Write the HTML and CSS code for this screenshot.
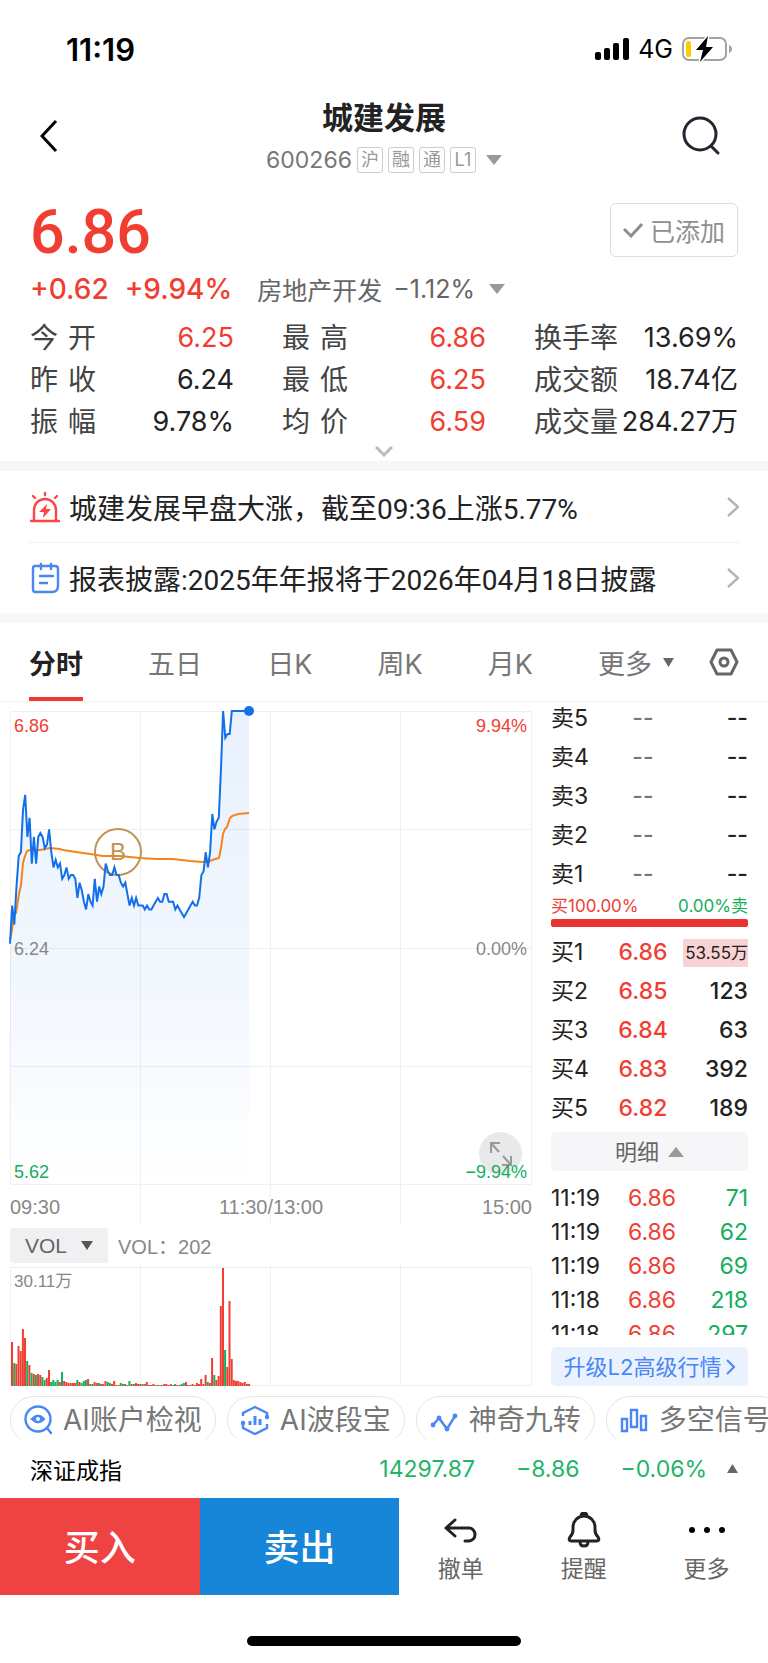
FILE: index.html
```html
<!DOCTYPE html>
<html lang="zh-CN">
<head>
  <meta charset="UTF-8" />
  <meta name="viewport" content="width=device-width, initial-scale=1" />
  <title>城建发展 600266</title>
  <link rel="stylesheet" href="styles.css">
</head>
<body>

<div class="status-bar">
  <span class="status-time">11:19</span>
  <div class="status-right">
    <svg width="34" height="22" viewBox="0 0 34 22">
      <rect x="0" y="14" width="6" height="8" rx="2"/>
      <rect x="9" y="10" width="6" height="12" rx="2"/>
      <rect x="18" y="5" width="6" height="17" rx="2"/>
      <rect x="28" y="0" width="6" height="22" rx="2"/>
    </svg>
    <span class="status-net">4G</span>
    <svg width="50" height="26" viewBox="0 0 50 26">
      <rect x="1" y="2" width="43" height="22" rx="6" fill="none" stroke="#a3a3a3" stroke-width="2"/>
      <path d="M47 9c2 1 3 2 3 4s-1 3-3 4z" fill="#a3a3a3"/>
      <rect x="4" y="5" width="5" height="16" rx="2" fill="#fc0"/>
      <path d="M26 0 14 14h7l-3 12L31 11h-7z" stroke="#fff" stroke-width="3" paint-order="stroke"/>
    </svg>
  </div>
</div>

<header class="header">
  <button class="icon-btn" aria-label="返回">
    <svg width="18" height="34" viewBox="0 0 18 34" fill="none" stroke="#000" stroke-width="3"><path d="M16 2 2 17l14 15"/></svg>
  </button>
  <div class="header-center">
    <h1 class="stock-name">城建发展</h1>
    <div class="stock-code">
      <span class="code">600266</span>
      <span class="tag">沪</span><span class="tag">融</span><span class="tag">通</span><span class="tag">L1</span>
      <svg class="code-arrow" width="16" height="10" viewBox="0 0 16 10" fill="#999"><path d="M0 0h16L8 10z"/></svg>
    </div>
  </div>
  <button class="icon-btn" aria-label="搜索">
    <svg width="40" height="40" viewBox="0 0 40 40" fill="none" stroke="#23252f" stroke-width="3" stroke-linecap="round"><circle cx="18" cy="18" r="16"/><path d="m29 30 7 7"/></svg>
  </button>
</header>

<section class="quote">
  <div class="price-row">
    <strong class="price">6.86</strong>
    <button class="added-btn">
      <svg width="20" height="16" viewBox="0 0 20 16" fill="none" stroke="#8f8f8f" stroke-width="3"><path d="m1 7 7 7L19 2"/></svg>
      已添加
    </button>
  </div>
  <div class="change-row">
    <span class="change">+0.62</span>
    <span class="change">+9.94%</span>
    <span class="sector">房地产开发</span>
    <span class="sector-num">−1.12%</span>
    <svg width="16" height="10" viewBox="0 0 16 10" fill="#999"><path d="M0 0h16L8 10z"/></svg>
  </div>
  <dl class="stats">
    <div class="stat"><dt class="two"><span>今</span><span>开</span></dt><dd class="up">6.25</dd></div>
    <div class="stat"><dt class="two"><span>最</span><span>高</span></dt><dd class="up">6.86</dd></div>
    <div class="stat"><dt>换手率</dt><dd>13.69%</dd></div>
    <div class="stat"><dt class="two"><span>昨</span><span>收</span></dt><dd>6.24</dd></div>
    <div class="stat"><dt class="two"><span>最</span><span>低</span></dt><dd class="up">6.25</dd></div>
    <div class="stat"><dt>成交额</dt><dd>18.74亿</dd></div>
    <div class="stat"><dt class="two"><span>振</span><span>幅</span></dt><dd>9.78%</dd></div>
    <div class="stat"><dt class="two"><span>均</span><span>价</span></dt><dd class="up">6.59</dd></div>
    <div class="stat"><dt>成交量</dt><dd>284.27万</dd></div>
  </dl>
  <button class="expand" aria-label="展开">
    <svg width="18" height="11" viewBox="0 0 18 11" fill="none" stroke="#bbb" stroke-width="3"><path d="m1 1 8 8 8-8"/></svg>
  </button>
</section>

<nav class="news">
  <a href="#" class="news-item">
    <svg width="32" height="32" viewBox="0 0 32 32" fill="none" stroke="#fa4646" stroke-width="2.4" stroke-linecap="round">
      <path d="M2 30h28M5 29V19a11 11 0 0 1 22 0v10M16 2v2M4 5l2 2M28 5l-2 2"/>
      <path d="m18 13-8 8h5l-1 6 8-9h-5z" fill="#fa4646" stroke="none"/>
    </svg>
    <span class="news-text">城建发展早盘大涨，截至09:36上涨5.77%</span>
    <svg width="12" height="20" viewBox="0 0 12 20" fill="none" stroke="#b5b5b5" stroke-width="2.4"><path d="m1 1 10 9-10 9"/></svg>
  </a>
  <a href="#" class="news-item">
    <svg width="32" height="32" viewBox="0 0 32 32" fill="none" stroke="#4a86f7" stroke-width="2.4" stroke-linecap="round">
      <path d="M6 4h20q3 0 3 3v17q0 6-6 6H6q-2 0-2-3V7q0-3 2-3zM12 2v5M22 2v5M11 14h13M11 21h7"/>
    </svg>
    <span class="news-text">报表披露:2025年年报将于2026年04月18日披露</span>
    <svg width="12" height="20" viewBox="0 0 12 20" fill="none" stroke="#b5b5b5" stroke-width="2.4"><path d="m1 1 10 9-10 9"/></svg>
  </a>
</nav>

<nav class="tabs">
  <div class="tab-list">
    <button class="tab active">分时</button>
    <button class="tab">五日</button>
    <button class="tab">日K</button>
    <button class="tab">周K</button>
    <button class="tab">月K</button>
    <button class="tab">更多 <svg width="11" height="9" viewBox="0 0 11 9" fill="#666"><path d="M0 0h11L5.500 9z"/></svg></button>
  </div>
  <button class="tab" aria-label="设置">
    <svg width="30" height="28" viewBox="0 0 30 28" fill="none" stroke="#666" stroke-width="3"><path d="M8 2h14l6 12-6 12H8L2 14z" stroke-linejoin="round"/><circle cx="15" cy="14" r="4"/></svg>
  </button>
</nav>

<main class="market">
  <div class="charts">
    <div class="price-chart">
      <svg class="plot" viewBox="0 0 522 513" preserveAspectRatio="none">
        <defs>
          <linearGradient id="fade" x1="0" y1="0" x2="0" y2="474" gradientUnits="userSpaceOnUse">
            <stop offset="0" stop-color="#1370e8" stop-opacity=".1"/>
            <stop offset=".6" stop-color="#1370e8" stop-opacity=".05"/>
            <stop offset="1" stop-color="#1370e8" stop-opacity="0"/>
          </linearGradient>
        </defs>
        <path class="grid" d="M0 .5h522M0 118.500h522M0 237.500h522M0 355.500h522M0 473.500h522M.5 0v474M130.500 0v513M260.500 0v513M390.500 0v513M521.500 0v474"/>
        <path id="area" fill="url(#fade)"/>
        <polyline class="avg" points="0,229 2,219 4,202 6,202 9,183 11,174 13,152 15,145 17,140 20,139 30,139 40,137 50,138 53,139 66,141 80,143 93,145 110,145 130,147 146,148 163,148 180,150 193,151 198,151 202,149 209,147 211,137 213,123 215,118 217,116 220,107 222,105 228,103 239,102"/>
        <g class="buy-mark"><circle cx="108" cy="141" r="23"/></g>
        <polyline id="line" class="line"/>
        <circle cx="239" cy="0" r="5" fill="#1370e8"/>
      </svg>
      <span class="label top-left up">6.86</span>
      <span class="label top-right up">9.94%</span>
      <span class="label mid-left">6.24</span>
      <span class="label mid-right">0.00%</span>
      <span class="label low-left down">5.62</span>
      <button class="full-btn" aria-label="全屏">
        <svg width="26" height="26" viewBox="0 0 26 26" fill="none" stroke="#999" stroke-width="2"><path d="M3 12V2h9M3 2l8 9M23 15v9h-9M23 24l-8-9"/></svg>
      </button>
      <span class="label low-right down">−9.94%</span>
      <span class="mark-text">B</span>
      <div class="times"><span>09:30</span><span>11:30/13:00</span><span>15:00</span></div>
    </div>
    <div class="vol-head">
      <button class="vol-btn">VOL <svg width="12" height="9" viewBox="0 0 12 9" fill="#555"><path d="M0 0h12L6 9z"/></svg></button>
      <span>VOL：202</span>
    </div>
    <div class="vol-chart">
      <svg class="plot" viewBox="0 0 522 121" preserveAspectRatio="none">
        <path class="grid" d="M0 2.500h522M0 120.500h522M.5 2v119M130.500 0v121M260.500 0v121M390.500 0v121M521.500 2v119"/>
        <g id="bars"></g>
      </svg>
      <span class="label vol-max">30.11万</span>
    </div>
  </div>

  <aside class="book">
    <table class="depth sell">
      <tr><th>卖5</th><td>--</td><td>--</td></tr>
      <tr><th>卖4</th><td>--</td><td>--</td></tr>
      <tr><th>卖3</th><td>--</td><td>--</td></tr>
      <tr><th>卖2</th><td>--</td><td>--</td></tr>
      <tr><th>卖1</th><td>--</td><td>--</td></tr>
    </table>
    <div class="ratio"><span class="up">买100.00%</span><span class="down">0.00%卖</span></div>
    <div class="ratio-bar"></div>
    <table class="depth buy">
      <tr><th>买1</th><td>6.86</td><td><span class="flash">53.55万</span></td></tr>
      <tr><th>买2</th><td>6.85</td><td>123</td></tr>
      <tr><th>买3</th><td>6.84</td><td>63</td></tr>
      <tr><th>买4</th><td>6.83</td><td>392</td></tr>
      <tr><th>买5</th><td>6.82</td><td>189</td></tr>
    </table>
    <button class="detail-btn">明细 <svg width="16" height="10" viewBox="0 0 16 10" fill="#999"><path d="M0 10h16L8 0z"/></svg></button>
    <div class="trades-wrap">
      <table class="trades">
        <tr><th>11:19</th><td>6.86</td><td>71</td></tr>
        <tr><th>11:19</th><td>6.86</td><td>62</td></tr>
        <tr><th>11:19</th><td>6.86</td><td>69</td></tr>
        <tr><th>11:18</th><td>6.86</td><td>218</td></tr>
        <tr><th>11:18</th><td>6.86</td><td>297</td></tr>
      </table>
    </div>
    <a href="#" class="upgrade">升级L2高级行情 <svg width="9" height="16" viewBox="0 0 9 16" fill="none" stroke="#4a86f7" stroke-width="2"><path d="m1 1 7 7-7 7"/></svg></a>
  </aside>
</main>

<div class="chips">
  <button class="chip">
    <svg width="28" height="30" viewBox="0 0 28 30" fill="none" stroke="#4a86f7" stroke-width="2.400" stroke-linecap="round"><circle cx="14" cy="14" r="12.500"/><path d="m23 23 4 5"/><path d="M7 14q7-8 14 0-7 8-14 0z" fill="#4a86f7" stroke-width="1"/><circle cx="14" cy="14" r="2" fill="#fff" stroke="none"/></svg>
    AI账户检视
  </button>
  <button class="chip">
    <svg width="28" height="30" viewBox="0 0 28 30" fill="none" stroke="#4a86f7" stroke-width="2.400"><path d="M2 11V8l12-6 12 6v5M2 18v5l12 6 12-6v-4"/><path d="M9 16v4M14 11v9M19 14v6" stroke-width="3"/><circle cx="2" cy="18" r="1"/><circle cx="26" cy="12" r="1"/></svg>
    AI波段宝
  </button>
  <button class="chip">
    <svg width="28" height="30" viewBox="0 0 28 30" fill="#4a86f7" stroke="#4a86f7" stroke-width="2.400" stroke-linejoin="round"><path d="m3 20 6-7 8 11 8-13" fill="none"/><circle cx="3" cy="20" r="1.200"/><circle cx="9" cy="13" r="1.200"/><circle cx="17" cy="24" r="1.200"/><circle cx="25" cy="11" r="1.200"/></svg>
    神奇九转
  </button>
  <button class="chip">
    <svg width="28" height="30" viewBox="0 0 28 30" fill="none" stroke="#4a86f7" stroke-width="2.400"><path d="M2 14h5v12H2zM11 5h6v17h-6zM21 11h5v14h-5z"/></svg>
    多空信号
  </button>
</div>

<div class="index-row">
  <span class="index-name">深证成指</span>
  <span>14297.87</span>
  <span>−8.86</span>
  <span>−0.06%</span>
  <svg width="11" height="9" viewBox="0 0 11 9" fill="#666"><path d="M0 9h11L5.500 0z"/></svg>
</div>

<footer class="actions">
  <button class="trade-btn buy-btn">买入</button>
  <button class="trade-btn sell-btn">卖出</button>
  <button class="tool">
    <svg width="36" height="36" viewBox="0 0 36 36" fill="none" stroke="#222" stroke-width="3" stroke-linecap="round" stroke-linejoin="round"><path d="M12 8 3 16l9 8M3 16h23a6 6.500 0 0 1 0 13h-4"/></svg>
    撤单
  </button>
  <button class="tool">
    <svg width="36" height="36" viewBox="0 0 36 36" fill="none" stroke="#222" stroke-width="3" stroke-linejoin="round"><path d="M5 29q-3 0-1-4 3-3 3-7v-3a11 11 0 0 1 22 0v3q0 4 3 7 2 4-1 4zM15 4q0-3 3-3t3 3M14 30q0 4 4 4t4-4"/></svg>
    提醒
  </button>
  <button class="tool">
    <svg width="36" height="36" viewBox="0 0 36 36"><circle cx="3" cy="18" r="3"/><circle cx="18" cy="18" r="3"/><circle cx="33" cy="18" r="3"/></svg>
    更多
  </button>
</footer>

<div class="home-area"><div class="home-bar"></div></div>

<script src="chart.js"></script>
</body>
</html>
```

FILE: styles.css
```css
* {
  box-sizing: border-box;
}

body {
  margin: 0;
  background: #fff;
  color: #222;
  font-family: Inter, "Noto Sans CJK SC", sans-serif;
}

button {
  margin: 0;
  padding: 0;
  border: 0;
  background: none;
  color: inherit;
  font: inherit;
  cursor: pointer;
}

a {
  color: inherit;
  text-decoration: none;
}

svg {
  flex: none;
}

.up {
  color: #f03e33;
}

.down {
  color: #14ae5c;
}

/* status bar */
.status-bar {
  display: flex;
  justify-content: space-between;
  align-items: center;
  height: 98px;
  padding: 0 36px 0 66px;
  color: #000;
}

.status-time {
  font-size: 31px;
  font-weight: 600;
}

.status-right {
  display: flex;
  align-items: center;
  gap: 9px;
}

.status-net {
  font-size: 25px;
}

/* header */
.header {
  display: flex;
  justify-content: space-between;
  height: 92px;
  padding: 0 40px;
}

.icon-btn {
  display: flex;
  align-items: center;
  width: 46px;
  height: 76px;
}

.stock-name {
  margin: 0;
  font-size: 31px;
  line-height: 40px;
  font-weight: 700;
  text-align: center;
}

.stock-code {
  display: flex;
  align-items: center;
  gap: 5px;
  margin-top: 9px;
}

.code {
  font-size: 23px;
  line-height: 26px;
  color: #777;
}

.tag {
  width: 26px;
  height: 26px;
  border: 1px solid #ccc;
  border-radius: 3px;
  font-size: 18px;
  line-height: 24px;
  text-align: center;
  color: #999;
}

.code-arrow {
  margin-left: 5px;
}

/* quote */
.quote {
  padding: 13px 30px 0;
}

.price-row {
  display: flex;
  justify-content: space-between;
  align-items: center;
  height: 54px;
}

.price {
  padding-top: 3px;
  font-family: Roboto, sans-serif;
  font-size: 61px;
  line-height: 54px;
  font-weight: 500;
  color: #f03e33;
}

.added-btn {
  display: flex;
  align-items: center;
  justify-content: center;
  gap: 7px;
  width: 128px;
  height: 54px;
  border: 1px solid #ddd;
  border-radius: 6px;
  font-size: 25px;
  color: #8f8f8f;
}

.change-row {
  display: flex;
  align-items: center;
  height: 32px;
  margin-top: 16px;
  white-space: nowrap;
}

.change {
  margin-right: 16px;
  font-size: 28px;
  font-weight: 500;
  color: #f03e33;
}

.sector {
  margin: 0 11px 0 9px;
  font-size: 25px;
  color: #666;
}

.sector-num {
  margin-right: 14px;
  font-size: 25px;
  color: #666;
}

.stats {
  display: grid;
  grid-template-columns: repeat(3, 1fr);
  column-gap: 48px;
  margin: 12px 0 0;
}

.stat {
  display: flex;
  justify-content: space-between;
  height: 42px;
  font-size: 28px;
  line-height: 42px;
  white-space: nowrap;
}

.stat dt {
  color: #444;
}

.stat dd {
  margin: 0;
  font-size: 27px;
}

.two {
  display: flex;
  justify-content: space-between;
  width: 66px;
}

.expand {
  display: flex;
  justify-content: center;
  width: 100%;
  height: 18px;
  padding-top: 3px;
}

/* news */
.news {
  padding: 0 29px;
  border-top: 10px solid #f5f6f9;
  border-bottom: 10px solid #f8f8f9;
}

.news-item {
  display: flex;
  align-items: center;
  height: 71px;
}

.news-item + .news-item {
  border-top: 1px solid #f2f2f2;
}

.news-text {
  flex: 1;
  margin-left: 8px;
  font-family: Roboto, "Noto Sans CJK SC", sans-serif;
  font-size: 28px;
}

/* tabs */
.tabs {
  display: flex;
  gap: 35px;
  height: 79px;
  padding: 0 29px;
  border-bottom: 1px solid #f2f2f2;
}

.tab-list {
  display: flex;
  flex: 1;
  justify-content: space-between;
}

.tab {
  display: flex;
  align-items: center;
  gap: 11px;
  border-top: 4px solid transparent;
  border-bottom: 4px solid transparent;
  font-size: 27px;
  color: #777;
}

.tab.active {
  border-bottom-color: #ee3a33;
  font-weight: 700;
  color: #222;
}

/* charts and order book */
.market {
  display: grid;
  grid-template-columns: minmax(0, 1fr) 197px;
  column-gap: 19px;
  padding: 0 20px 10px 10px;
}

.charts {
  padding-top: 9px;
  font-family: "Liberation Sans", "Noto Sans CJK SC", sans-serif;
}

.price-chart {
  position: relative;
  display: flex;
  align-items: flex-end;
  height: 513px;
}

.plot {
  position: absolute;
  inset: 0;
  width: 100%;
  height: 100%;
  overflow: visible;
}

.grid {
  fill: none;
  stroke: #f0f0f0;
}

.line {
  fill: none;
  stroke: #1370e8;
  stroke-width: 2;
}

.avg {
  fill: none;
  stroke: #f58518;
  stroke-width: 2;
}

.buy-mark {
  fill: none;
  stroke: #c29350;
  stroke-width: 2;
}

.mark-text {
  position: absolute;
  left: 96px;
  top: 129px;
  width: 24px;
  font-size: 24px;
  line-height: 24px;
  text-align: center;
  color: #c29350;
}

.label {
  position: absolute;
  font-size: 18px;
  line-height: 20px;
}

.mid-left,
.mid-right,
.vol-max {
  color: #888;
}

.top-left,
.mid-left,
.low-left,
.vol-max {
  left: 4px;
}

.top-right,
.mid-right,
.low-right {
  right: 5px;
}

.top-left,
.top-right {
  top: 5px;
}

.mid-left,
.mid-right {
  top: 228px;
}

.low-left,
.low-right {
  bottom: 42px;
}

.vol-max {
  top: 7px;
  font-size: 17px;
}

.full-btn {
  position: absolute;
  right: 10px;
  bottom: 49px;
  width: 43px;
  height: 43px;
  border-radius: 50%;
  background: #e9e9e9;
  display: flex;
  align-items: center;
  justify-content: center;
}

.times {
  position: relative;
  display: flex;
  justify-content: space-between;
  width: 100%;
  font-size: 20px;
  line-height: 34px;
  color: #888;
}

.vol-head {
  display: flex;
  align-items: center;
  gap: 10px;
  margin: 4px 0 2px;
  font-size: 20px;
  color: #888;
}

.vol-btn {
  display: flex;
  align-items: center;
  justify-content: center;
  gap: 14px;
  width: 98px;
  height: 35px;
  border-radius: 3px;
  background: #f0f0f2;
  font-size: 21px;
  color: #666;
}

.vol-chart {
  position: relative;
  height: 121px;
}

.depth,
.trades {
  width: 100%;
  table-layout: fixed;
  border-collapse: collapse;
}

.depth {
  font-size: 23px;
}

.depth th,
.depth td,
.trades th,
.trades td {
  padding: 0 0 8px;
  line-height: 31px;
  font-weight: 400;
  text-align: center;
}

.depth tr:last-child > * {
  padding-bottom: 0;
}

.depth th {
  width: 60px;
  text-align: left;
  white-space: nowrap;
}

.depth td:nth-child(2) {
  width: 64px;
}

.depth td:last-child,
.trades td:last-child {
  text-align: right;
}

.sell {
  margin-top: 1px;
}

.sell td:nth-child(2) {
  color: #777;
}

.buy {
  margin-top: 10px;
}

.depth td {
  font-weight: 500;
}

.buy td:nth-child(2),
.trades td:nth-child(2) {
  color: #f03e33;
}

.flash {
  display: block;
  margin-left: 8px;
  background: #f9d3d3;
  font-size: 17px;
  line-height: 28px;
  font-weight: 400;
  white-space: nowrap;
}

.ratio {
  display: flex;
  justify-content: space-between;
  margin-top: 4px;
  font-size: 17px;
  line-height: 25px;
}

.ratio-bar {
  height: 8px;
  border-radius: 2px;
  background: #e93434;
}

.detail-btn,
.upgrade {
  display: flex;
  align-items: center;
  justify-content: center;
  gap: 9px;
  width: 100%;
  height: 39px;
  border-radius: 5px;
  font-size: 22px;
  line-height: 36px;
}

.detail-btn {
  margin-top: 8px;
  background: #f6f6f8;
  color: #666;
}

.trades-wrap {
  height: 154px;
  margin: 10px 0 12px;
  overflow: hidden;
}

.trades {
  font-size: 23px;
}

.trades th,
.trades td {
  padding: 0;
  line-height: 34px;
}

.trades th {
  width: 60px;
  text-align: left;
}

.trades td:nth-child(2) {
  width: 82px;
}

.trades td:last-child {
  color: #14ae5c;
}

.upgrade {
  gap: 5px;
  background: #eaf2fe;
  color: #4a86f7;
}

/* feature chips, cut off at the bottom of the scroll area */
.chips {
  display: flex;
  gap: 11px;
  height: 43px;
  padding-left: 10px;
  overflow: hidden;
}

.chip {
  display: flex;
  flex: none;
  align-items: center;
  gap: 11px;
  height: 48px;
  padding: 0 13px;
  border: 1px solid #e6e6e6;
  border-radius: 24px;
  font-size: 28px;
  line-height: 46px;
  color: #777;
}

/* index ticker */
.index-row {
  display: flex;
  align-items: center;
  height: 59px;
  padding: 0 30px;
  font-size: 23px;
  color: #1fb469;
}

.index-row span + span {
  margin-right: 41px;
}

.index-row span:nth-child(4) {
  margin-right: 20px;
}

.index-name {
  flex: 1;
  color: #000;
}

/* bottom actions */
.actions {
  display: flex;
  height: 97px;
}

.trade-btn {
  width: 26%;
  padding-bottom: 3px;
  font-size: 36px;
  font-weight: 500;
  color: #fff;
}

.buy-btn {
  background: #ef4343;
}

.sell-btn {
  background: #1786d8;
}

.tool {
  display: flex;
  flex: 1;
  flex-direction: column;
  align-items: center;
  gap: 4px;
  padding-top: 14px;
  font-size: 23px;
  line-height: 34px;
  color: #666;
}

.home-area {
  padding: 41px 0 17px;
}

.home-bar {
  width: 274px;
  height: 10px;
  margin: 0 auto;
  border-radius: 5px;
  background: #000;
}
```

FILE: chart.js
```js
// price per minute, in cents, from 09:30
const prices = [
  625, 635, 630, 640, 648, 649, 660, 664, 653, 658, 646, 653, 646, 653, 654, 653, 650, 651, 655, 649,
  645, 647, 645, 646, 642, 643, 645, 642, 643, 643, 642, 637, 641, 639, 636, 634, 638, 636, 635, 642,
  636, 640, 638, 640, 646, 644, 643, 643, 645, 643, 643, 641, 640, 641, 638, 635, 637, 635, 637, 635,
  635, 635, 634, 635, 634, 634, 635, 636, 637, 636, 636, 638, 638, 636, 636, 636, 634, 635, 634, 633,
  632, 633, 634, 635, 636, 635, 635, 637, 643, 644, 649, 645, 649, 659, 655, 657, 658, 671, 686, 679,
  680, 680, 686, 686, 686, 686, 686, 686, 686, 686, 686
];

// volume bar heights, negative = falling minute
const volumes = [
  44, -23, 22, 40, 35, 57, 48, -25, 21, -13, 12, -11, 12, 11, -9, -6, 8, 16, -4, -6,
  -4, -6, 4, -14, 5, 4, 3, 3, 3, 3, -6, 4, -3, -5, -6, 7, -2, -2, 4, 3,
  -3, 2, 2, 5, -4, -3, 2, 5, 1, 1, -3, -2, 2, -1, -5, 2, -2, 3, 2, -2,
  2, -2, 4, 1, 1, 2, 1, 1, -1, 1, 2, 2, 1, 2, -1, -2, 1, 1, -2, -3,
  4, 1, 1, 2, 1, 3, 2, 7, 2, 11, -4, 3, 28, -11, 6, 10, 80, 118, -36, 19,
  85, 27, 6, 5, 5, 4, 3, 4, 2, 2
];

const step = 522 / 240;
const points = prices.map((p, i) => `${(i * step).toFixed(1)},${((686 - p) * 236.5 / 62).toFixed(1)}`);
document.getElementById('line').setAttribute('points', points.join(' '));
document.getElementById('area').setAttribute('d', `M0,474 L${points.join(' L')} V474 Z`);

const bars = document.getElementById('bars');
volumes.forEach((v, i) => {
  const bar = document.createElementNS('http://www.w3.org/2000/svg', 'rect');
  const h = Math.abs(v);
  bar.setAttribute('x', (i * step + 1).toFixed(1));
  bar.setAttribute('y', 121 - h);
  bar.setAttribute('width', 2);
  bar.setAttribute('height', h);
  bar.setAttribute('fill', v > 0 ? '#f03e33' : '#14ae5c');
  bars.appendChild(bar);
});
```
